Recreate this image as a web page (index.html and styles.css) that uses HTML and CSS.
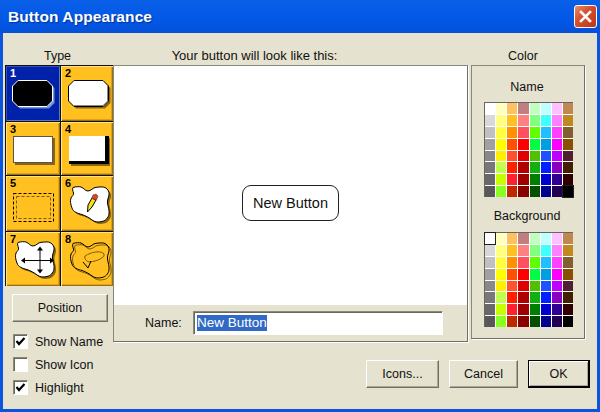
FILE: index.html
```html
<!DOCTYPE html>
<html lang="en">
<head>
    <meta charset="utf-8">
    <title>Button Appearance</title>
    <link rel="stylesheet" href="styles.css">
</head>
<body>
    <svg class="defs" width="0" height="0">
        <defs>
            <path id="blob" d="M3 1.500C6 .5 9 .5 11 1C14 2 15 5 18 5C21 5 23 1.500 26 1.300C30 1 33 .5 35 1.500C38 3 39.500 6 39 9C38.500 12 37 14 37.500 17C38 21 39.500 24 39 28C38.500 32 35 35 32 35.500C28 36.500 25 36 22 34C19 31.500 16 30 12 28.500C8 27.500 3 26 2 22C.5 18 0 15 1 12C2 10 4 9 3.500 7C3 5 2 3 3 1.500Z"/>
            <path id="octagon" d="M6 .5H35L40.500 6V21L35 26.500H6L.5 21V6Z"/>
        </defs>
    </svg>

    <div class="window">
        <div class="titlebar">
            <span class="title">Button Appearance</span>
            <div class="close">
                <svg width="13" height="13" viewBox="0 0 13 13"><path d="M2 2L11 11M11 2L2 11" stroke="#fff" stroke-width="2.600" stroke-linecap="square"/></svg>
            </div>
        </div>

        <div class="client">
            <div class="left">
                <div class="label">Type</div>
                <div class="types">
                    <div class="type selected">
                        <span class="num">1</span>
                        <svg width="53" height="54"><use href="#octagon" x="8" y="16" fill="#6a94e4"/><use href="#octagon" x="6" y="14" fill="#000" stroke="#fff"/></svg>
                    </div>
                    <div class="type">
                        <span class="num">2</span>
                        <svg width="53" height="54"><use href="#octagon" x="9" y="16" fill="#8a6410"/><use href="#octagon" x="7" y="14" fill="#fff" stroke="#000"/><path d="M13 39.500H42L46.500 35V20" fill="none" stroke="#888"/></svg>
                    </div>
                    <div class="type">
                        <span class="num">3</span>
                        <svg width="53" height="54"><rect x="9" y="16" width="40" height="27" fill="#8a6410"/><rect x="7.500" y="14.500" width="39" height="26" fill="#fff" stroke="#555"/></svg>
                    </div>
                    <div class="type">
                        <span class="num">4</span>
                        <svg width="53" height="54"><rect x="10" y="16" width="39" height="28" fill="#8a6410"/><rect x="8" y="14" width="40" height="28" fill="#000"/><rect x="8" y="14" width="36" height="25" fill="#fff"/></svg>
                    </div>
                    <div class="type">
                        <span class="num">5</span>
                        <svg width="53" height="54"><rect x="7.500" y="17.500" width="40" height="28" fill="none" stroke="#000" stroke-dasharray="3 2"/><rect x="10.500" y="20.500" width="34" height="22" fill="none" stroke="#7a5a10" stroke-dasharray="3 2"/></svg>
                    </div>
                    <div class="type">
                        <span class="num">6</span>
                        <svg width="53" height="54"><use href="#blob" x="11" y="12" fill="#8a6410"/><use href="#blob" x="9" y="10" fill="#fff" stroke="#000"/><path d="M26.500 36L27 29L31 22L35 24L31 31Z" fill="#f5e020" stroke="#000"/><path d="M30.500 22.500L32 19L35 18L37 20L35.500 24Z" fill="#e8401c" stroke="#333" stroke-width=".5"/></svg>
                    </div>
                    <div class="type">
                        <span class="num">7</span>
                        <svg width="53" height="54"><use href="#blob" x="11" y="11" fill="#8a6410"/><use href="#blob" x="9" y="9" fill="#fff" stroke="#000"/><path d="M16 28.500H47M34 16V40" stroke="#000" fill="none"/><path d="M15 28.500L19 25.500V31.500ZM48 28.500L44 25.500V31.500ZM34 14.500L31 18.500H37ZM34 41.500L31 37.500H37Z" fill="#000"/></svg>
                    </div>
                    <div class="type">
                        <span class="num">8</span>
                        <svg width="53" height="54"><use href="#blob" x="11" y="12" fill="none" stroke="#7a5a10"/><use href="#blob" x="9" y="10" fill="none" stroke="#000"/><path d="M24 24C30 20 40 18 43 22C44 26 36 29 29 30C26 30 23 27 24 24Z" fill="none" stroke="#7a5a10"/><path d="M22 30L27 36L30 29" fill="none" stroke="#000"/></svg>
                    </div>
                </div>
                <div class="btn position">Position</div>
                <div class="checks">
                    <div class="check">
                        <span class="box"><svg width="11" height="11" viewBox="0 0 11 11"><path d="M1.500 5L4 8L9.500 2" fill="none" stroke="#000" stroke-width="2.200"/></svg></span>
                        Show Name
                    </div>
                    <div class="check">
                        <span class="box"></span>
                        Show Icon
                    </div>
                    <div class="check">
                        <span class="box"><svg width="11" height="11" viewBox="0 0 11 11"><path d="M1.500 5L4 8L9.500 2" fill="none" stroke="#000" stroke-width="2.200"/></svg></span>
                        Highlight
                    </div>
                </div>
            </div>

            <div class="right">
                <div class="top">
                    <div class="middle">
                        <div class="label preview-label">Your button will look like this:</div>
                        <div class="panel preview-panel">
                            <div class="preview">
                                <div class="sample">New Button</div>
                            </div>
                            <div class="name-row">
                                <span class="name-label">Name:</span>
                                <div class="name-field"><span class="sel">New Button</span></div>
                            </div>
                        </div>
                    </div>
                    <div class="color">
                        <div class="label color-label">Color</div>
                        <div class="panel color-panel">
                            <div class="color-title first">Name</div>
                            <div class="palette" data-pick="63"></div>
                            <div class="color-title">Background</div>
                            <div class="palette" data-pick="0"></div>
                        </div>
                    </div>
                </div>
                <div class="actions">
                    <div class="btn">Icons...</div>
                    <div class="btn cancel">Cancel</div>
                    <div class="btn ok">OK</div>
                </div>
            </div>
        </div>
    </div>

    <script src="script.js"></script>
</body>
</html>
```

FILE: styles.css
```css
html, body {
    margin: 0;
    padding: 0;
}
body {
    width: 600px;
    height: 412px;
    overflow: hidden;
    font-family: "Liberation Sans", Arial, sans-serif;
    font-size: 12.500px;
    color: #111;
}
.defs {
    display: block;
    height: 0;
}
.window {
    width: 600px;
    height: 412px;
    display: flex;
    flex-direction: column;
    background-color: #0a54e0;
}
.titlebar {
    height: 33px;
    flex: none;
    display: flex;
    align-items: center;
    justify-content: space-between;
    padding: 0 3px 0 8px;
    background: linear-gradient(#0a5fe8, #0258e6 60%, #0450d8);
}
.title {
    color: #fff;
    font-size: 15.500px;
    font-weight: bold;
    letter-spacing: 0.100px;
    text-shadow: 1px 1px 1px #0a2f90;
}
.close {
    width: 23px;
    height: 23px;
    display: flex;
    align-items: center;
    justify-content: center;
    border: 1px solid #fff;
    border-radius: 3px;
    box-sizing: border-box;
    background: linear-gradient(135deg, #e88c6c, #d8502c 40%, #b8341c);
}
.client {
    flex: 1;
    display: flex;
    margin: 0 3px 3px 3px;
    padding: 0 7px 0 2px;
    background-color: #e5e2d0;
}
.label {
    height: 32px;
    box-sizing: border-box;
    padding-bottom: 2px;
    display: flex;
    align-items: flex-end;
    justify-content: center;
    white-space: nowrap;
}
.preview-label {
    padding-right: 72px;
    font-size: 13px;
}
.color-label {
    padding-right: 10px;
}
.left {
    width: 108px;
    flex: none;
}
.left .label {
    padding-right: 3px;
}
.types {
    display: grid;
    grid-template-columns: 54px 52px;
    grid-template-rows: 55px 53px 55px 54px;
    width: 108px;
    height: 221px;
    box-sizing: border-box;
    gap: 1px;
    background-color: #111;
    border-left: 1px solid #111;
    border-top: 1px solid #111;
}
.type {
    position: relative;
    background-color: #ffc020;
    box-shadow: inset 1px 1px 0 #ffe48a, inset -1px -1px 0 #9a7010, inset -2px -2px 0 #e0a018;
    overflow: hidden;
}
.type.selected {
    background-color: #0022aa;
    box-shadow: inset 1px 1px 0 #3050c0, inset -1px -1px 0 #6078b8;
}
.type svg {
    display: block;
}
.num {
    position: absolute;
    left: 4px;
    top: 1px;
    font-size: 11px;
    font-weight: bold;
    color: #000;
}
.selected .num {
    color: #fff;
}
.btn {
    height: 28px;
    display: flex;
    align-items: center;
    justify-content: center;
    box-sizing: border-box;
    background-color: #e5e2d0;
    border: 1px solid;
    border-color: #fff #716f64 #716f64 #fff;
    box-shadow: inset -1px -1px 0 #aca899;
    width: 73px;
}
.position {
    width: 96px;
    margin: 8px 0 0 7px;
}
.checks {
    margin: 12px 0 0 8px;
    display: flex;
    flex-direction: column;
    gap: 8px;
}
.check {
    display: flex;
    align-items: center;
    gap: 7px;
    height: 15px;
    white-space: nowrap;
}
.box {
    width: 15px;
    height: 15px;
    box-sizing: border-box;
    display: flex;
    align-items: center;
    justify-content: center;
    background-color: #fff;
    border: 1px solid;
    border-color: #8a8878 #fff #fff #8a8878;
    box-shadow: inset 1px 1px 0 #6a6858;
}
.right {
    flex: 1;
    display: flex;
    flex-direction: column;
}
.top {
    display: flex;
    align-items: flex-start;
    gap: 3px;
    margin-right: 5px;
}
.middle {
    width: 355px;
    flex: none;
}
.color {
    width: 114px;
    flex: none;
}
.panel {
    box-sizing: border-box;
    border: 1px solid;
    border-color: #8a8878 #716f64 #716f64 #8a8878;
    box-shadow: 1px 1px 0 #fff;
}
.preview-panel {
    height: 277px;
}
.preview {
    height: 239px;
    box-sizing: border-box;
    padding-top: 119px;
    display: flex;
    justify-content: center;
    align-items: flex-start;
    background-color: #fff;
}
.sample {
    width: 97px;
    height: 36px;
    box-sizing: border-box;
    display: flex;
    align-items: center;
    justify-content: center;
    border: 1px solid #222;
    border-radius: 9px;
    font-size: 14.500px;
}
.name-row {
    height: 36px;
    display: flex;
    align-items: center;
    padding-left: 31px;
}
.name-label {
    width: 48px;
}
.name-field {
    width: 250px;
    height: 24px;
    box-sizing: border-box;
    display: flex;
    align-items: center;
    padding-left: 3px;
    background-color: #fff;
    border: 1px solid;
    border-color: #8a8878 #fff #fff #8a8878;
    box-shadow: inset 1px 1px 0 #6a6858;
    font-size: 13.500px;
}
.sel {
    background-color: #316ac5;
    color: #fff;
    line-height: 16px;
}
.color-panel {
    height: 274px;
    padding-left: 12px;
}
.color-title {
    width: 86px;
    height: 16px;
    line-height: 16px;
    margin: 11px 0 8px;
    text-align: center;
    white-space: nowrap;
}
.color-title.first {
    margin: 13px 0 7px;
}
.palette {
    width: 89px;
    height: 95px;
    box-sizing: border-box;
    display: grid;
    grid-template-columns: repeat(8, 1fr);
    grid-template-rows: repeat(8, 1fr);
    gap: 1px;
    background-color: #fff;
    border-left: 1px solid #666;
    border-top: 1px solid #666;
}
.swatch {
    min-width: 0;
    min-height: 0;
}
.swatch.pick {
    outline: 1px solid #222;
}
.actions {
    display: flex;
    justify-content: flex-end;
    gap: 10px;
    margin-top: 18px;
}
.cancel {
    width: 69px;
}
.ok {
    width: 62px;
    border: 1px solid #000;
    border-width: 1px 2px 2px 1px;
    box-shadow: inset 1px 1px 0 #fff, inset -1px -1px 0 #aca899;
}
```

FILE: script.js
```js
var colors = [
    '#ffffff', '#ffffc0', '#ffc060', '#c08080', '#c0ffc0', '#c0ffff', '#ffc0ff', '#c08850',
    '#d8d8d8', '#ffff80', '#ffc020', '#ff8080', '#80ff80', '#40ffff', '#ff80ff', '#c08820',
    '#c0c0c0', '#ffff40', '#ff9000', '#ff5060', '#60ff00', '#20c0ff', '#ff40ff', '#806030',
    '#a0a0a0', '#ffff00', '#ff5000', '#ff0000', '#00ff40', '#00a0e0', '#ff00ff', '#885000',
    '#888888', '#fff000', '#ff5030', '#e00000', '#50c000', '#2050ff', '#c000ff', '#502030',
    '#787878', '#c0ff50', '#ff2000', '#b00000', '#10b010', '#0020ff', '#8800c0', '#402000',
    '#686868', '#c8ff00', '#ff2030', '#a00000', '#008000', '#0000d0', '#300090', '#300000',
    '#585858', '#88ff20', '#c02800', '#880000', '#005000', '#000090', '#200050', '#000000'
];

document.querySelectorAll('.palette').forEach(function(palette) {
    var pick = Number(palette.dataset.pick);
    colors.forEach(function(color, i) {
        var swatch = document.createElement('div');
        swatch.className = i === pick ? 'swatch pick' : 'swatch';
        swatch.style.backgroundColor = color;
        palette.appendChild(swatch);
    });
});
```
